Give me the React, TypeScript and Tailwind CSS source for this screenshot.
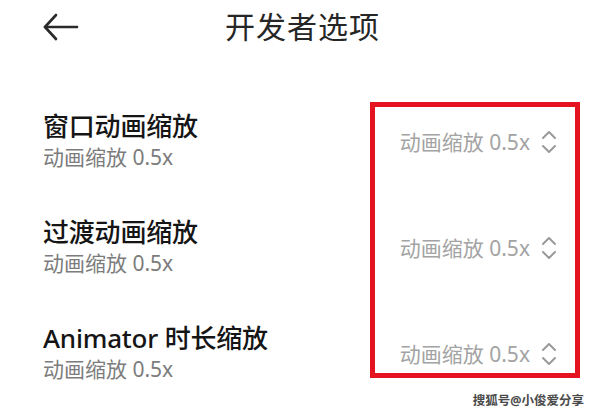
import React from 'react';

const rows = [
  { title: '窗口动画缩放', value: '动画缩放 0.5x' },
  { title: '过渡动画缩放', value: '动画缩放 0.5x' },
  { title: 'Animator 时长缩放', value: '动画缩放 0.5x' },
];

const font = { fontFamily: '"Noto Sans", "Noto Sans CJK SC", sans-serif' };

const BackArrow = () => (
  <svg width="36" height="28" viewBox="0 0 36 28" fill="none" stroke="#2a2a2a" strokeWidth="2.6" strokeLinecap="round" strokeLinejoin="round">
    <path d="M34 14H2" />
    <path d="M13 2L2 14l11 12" />
  </svg>
);

const Chevrons = () => (
  <svg width="16" height="26" viewBox="0 0 16 26" fill="none" stroke="#9a9a9a" strokeWidth="2" strokeLinecap="round" strokeLinejoin="round">
    <path d="M2 9l6-6 6 6" />
    <path d="M2 17l6 6 6-6" />
  </svg>
);

export default function App() {
  return (
    <div className="relative w-[600px] h-[413px] bg-white overflow-hidden" style={font}>
      {/* Header */}
      <div className="flex items-center h-[54px] pl-[43px]">
        <BackArrow />
        <span className="ml-[146px] text-[30px] leading-none text-[#262626] tracking-[1px]">开发者选项</span>
      </div>

      {/* Rows */}
      <div className="mt-[35px] flex flex-col">
        {rows.map((row) => (
          <div key={row.title} className="flex items-center justify-between h-[106px] pl-[43px] pr-[43px]">
            <div className="flex flex-col -mt-[3px]">
              <span className="text-[26px] leading-[33px] font-medium text-[#151515] tracking-[-0.2px]">{row.title}</span>
              <span className="text-[21px] leading-[28px] text-[#7c7c7c]">动画缩放 0.5x</span>
            </div>
            <div className="flex items-center gap-[11px]">
              <span className="text-[21px] leading-none text-[#a3a3a3]">{row.value}</span>
              <Chevrons />
            </div>
          </div>
        ))}
      </div>

      {/* Red annotation box */}
      <div className="absolute left-[370px] top-[102px] w-[210px] h-[276px] border-[5px] border-[#e5131f]" />

      {/* Watermark */}
      <div
        className="absolute right-[16px] bottom-[6px] text-[12.5px] leading-none font-bold text-[#4a4a4a]"
        style={{ textShadow: '0 0 2px #fff, 0 0 2px #fff' }}
      >
        搜狐号@小俊爱分享
      </div>
    </div>
  );
}
